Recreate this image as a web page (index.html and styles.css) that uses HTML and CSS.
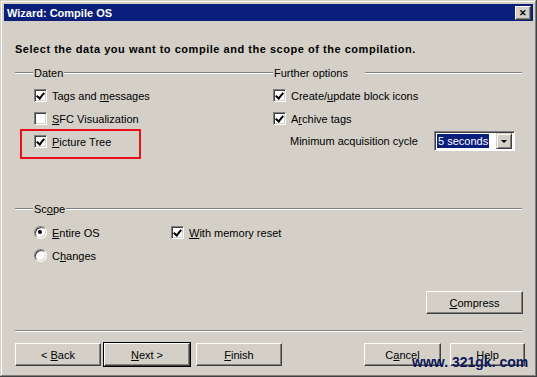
FILE: index.html
```html
<!DOCTYPE html>
<html lang="en">

<head>
    <meta charset="UTF-8">
    <title>Wizard: Compile OS</title>
    <link rel="stylesheet" href="styles.css">
</head>

<body>
    <div class="window">
        <div class="titlebar">
            <span class="title">Wizard: Compile OS</span>
            <span class="close-btn">&#x2715;</span>
        </div>

        <div class="content">
            <h1 class="intro">Select the data you want to compile and the scope of the compilation.</h1>

            <div class="top-groups">
                <div class="group">
                    <div class="group-head">
                        <span class="line lead"></span>
                        <span class="group-label">Daten</span>
                        <span class="line"></span>
                    </div>
                    <div class="group-body">
                        <label class="option"><span class="check checked"></span><span>Tags and <u>m</u>essages</span></label>
                        <label class="option"><span class="check"></span><span><u>S</u>FC Visualization</span></label>
                        <label class="option highlighted"><span class="check checked"></span><span><u>P</u>icture Tree</span></label>
                    </div>
                </div>

                <div class="group">
                    <div class="group-head">
                        <span class="group-label">Further options</span>
                        <span class="line gap"></span>
                    </div>
                    <div class="group-body flush">
                        <label class="option"><span class="check checked"></span><span>Create/<u>u</u>pdate block icons</span></label>
                        <label class="option"><span class="check checked"></span><span>A<u>r</u>chive tags</span></label>
                        <div class="option cycle">
                            <span>Minimum acquisition cycle</span>
                            <div class="select">
                                <span class="select-value">5 seconds</span>
                                <span class="select-btn"></span>
                            </div>
                        </div>
                    </div>
                </div>
            </div>

            <div class="group scope">
                <div class="group-head">
                    <span class="line lead"></span>
                    <span class="group-label">Sc<u>o</u>pe</span>
                    <span class="line"></span>
                </div>
                <div class="scope-grid">
                    <label class="option"><span class="radio selected"></span><span><u>E</u>ntire OS</span></label>
                    <label class="option"><span class="check checked"></span><span><u>W</u>ith memory reset</span></label>
                    <label class="option"><span class="radio"></span><span>C<u>h</u>anges</span></label>
                </div>
            </div>

            <div class="compress-row">
                <button class="btn compress"><u>C</u>ompress</button>
            </div>

            <div class="separator"></div>

            <div class="button-row">
                <div class="btn-group">
                    <button class="btn">&lt; <u>B</u>ack</button>
                    <button class="btn default"><u>N</u>ext &gt;</button>
                    <button class="btn finish"><u>F</u>inish</button>
                </div>
                <div class="btn-group">
                    <button class="btn cancel">C<u>a</u>ncel</button>
                    <button class="btn help">Help</button>
                </div>
            </div>
        </div>

        <div class="watermark">www. 321gk. com</div>
    </div>
</body>

</html>
```

FILE: styles.css
```css
:root {
    --face: #d4d0c8;
    --shadow: #808080;
    --dark: #404040;
    --light: #ffffff;
    --title: #0a1e7c;
}

* {
    box-sizing: border-box;
    margin: 0;
    padding: 0;
}

body {
    font-family: 'Liberation Sans', Arial, sans-serif;
    font-size: 11px;
    color: #000;
    background: var(--face);
    width: 537px;
    height: 377px;
    overflow: hidden;
}

.window {
    position: relative;
    width: 537px;
    height: 377px;
    padding: 4px;
    background: var(--face);
    box-shadow: inset -1px -1px var(--dark), inset 1px 1px var(--face),
        inset -2px -2px var(--shadow), inset 2px 2px var(--light);
}

.titlebar {
    height: 17px;
    background: var(--title);
    display: flex;
    align-items: center;
    justify-content: space-between;
    padding: 0 2px 0 3px;
}

.title {
    color: #fff;
    font-weight: bold;
    font-size: 11px;
}

.close-btn {
    width: 16px;
    height: 14px;
    background: var(--face);
    font-size: 9px;
    font-weight: bold;
    line-height: 12px;
    text-align: center;
    border: 1px solid;
    border-color: var(--light) var(--dark) var(--dark) var(--light);
    box-shadow: inset -1px -1px var(--shadow);
}

.content {
    padding: 0 11px;
}

.intro {
    font-size: 11px;
    font-weight: bold;
    letter-spacing: 0.53px;
    margin-top: 22px;
    line-height: 13px;
    white-space: nowrap;
}

.top-groups {
    display: grid;
    grid-template-columns: 258px 1fr;
    margin-top: 10px;
}

.group-head {
    display: flex;
    align-items: center;
    height: 13px;
}

.line {
    flex: 1;
    height: 2px;
    border-top: 1px solid var(--shadow);
    border-bottom: 1px solid var(--light);
}

.line.lead {
    flex: 0 0 18px;
}

.line.gap {
    margin-left: 16px;
}

.group-label {
    padding: 0 1px;
}

.group-body {
    display: flex;
    flex-direction: column;
    gap: 10px;
    padding: 10px 0 0 19px;
}

.group-body.flush {
    padding-left: 0;
}

.option {
    display: flex;
    align-items: center;
    height: 13px;
    position: relative;
    white-space: nowrap;
}

.check,
.radio {
    width: 13px;
    height: 13px;
    margin-right: 5px;
    background: #fff;
    flex: none;
    position: relative;
    border: 1px solid;
    border-color: var(--shadow) var(--light) var(--light) var(--shadow);
    box-shadow: inset 1px 1px var(--dark), inset -1px -1px var(--face);
}

.check.checked::after {
    content: "";
    position: absolute;
    left: 3px;
    top: 1px;
    width: 3px;
    height: 6px;
    border: solid #000;
    border-width: 0 2px 2px 0;
    transform: rotate(40deg);
}

.radio {
    border-radius: 50%;
    margin-right: 5px;
}

.radio.selected::after {
    content: "";
    position: absolute;
    left: 3px;
    top: 3px;
    width: 4px;
    height: 4px;
    border-radius: 50%;
    background: #000;
}

.highlighted::before {
    content: "";
    position: absolute;
    left: -14px;
    top: -6px;
    width: 117px;
    height: 26px;
    border: 2px solid #e8101c;
}

.cycle {
    padding-left: 17px;
    justify-content: space-between;
    width: 242px;
    height: 20px;
    margin-top: -4px;
}

.select {
    width: 81px;
    height: 20px;
    background: #fff;
    display: flex;
    align-items: center;
    padding: 2px;
    border: 1px solid;
    border-color: var(--shadow) var(--light) var(--light) var(--shadow);
    box-shadow: inset 1px 1px var(--dark);
}

.select-value {
    flex: 1;
    background: var(--title);
    color: #fff;
    height: 14px;
    line-height: 14px;
    padding-left: 1px;
    margin-right: 7px;
    white-space: nowrap;
    overflow: hidden;
}

.select-btn {
    flex: none;
    width: 16px;
    height: 16px;
    background: var(--face);
    border: 1px solid;
    border-color: var(--face) var(--dark) var(--dark) var(--face);
    box-shadow: inset 1px 1px var(--light), inset -1px -1px var(--shadow);
    position: relative;
}

.select-btn::after {
    content: "";
    position: absolute;
    left: 4px;
    top: 6px;
    border: 3px solid transparent;
    border-top: 3px solid #000;
}

.scope {
    margin-top: 51px;
}

.scope-grid {
    display: grid;
    grid-template-columns: 137px 1fr;
    row-gap: 10px;
    padding: 11px 0 0 19px;
}

.compress-row {
    display: flex;
    justify-content: flex-end;
    margin-top: 29px;
    margin-right: -1px;
}

.btn {
    font-family: inherit;
    font-size: 11px;
    height: 23px;
    width: 86px;
    background: var(--face);
    color: #000;
    border: 1px solid;
    border-color: var(--light) var(--dark) var(--dark) var(--light);
    box-shadow: inset -1px -1px var(--shadow);
}

.btn.compress {
    width: 97px;
}

.btn.default {
    outline: 1px solid #000;
    margin-left: 3px;
}

.btn.finish {
    margin-left: 6px;
}

.btn.cancel {
    width: 77px;
}

.btn.help {
    width: 75px;
    margin-left: 9px;
    margin-right: -3px;
}

.separator {
    height: 2px;
    margin-top: 16px;
    border-top: 1px solid var(--shadow);
    border-bottom: 1px solid var(--light);
}

.button-row {
    display: flex;
    justify-content: space-between;
    margin-top: 11px;
}

.btn-group {
    display: flex;
}

.watermark {
    position: absolute;
    left: 412px;
    top: 354px;
    font-family: 'Liberation Sans', Arial, sans-serif;
    font-size: 14px;
    font-weight: bold;
    color: #0c1656;
    white-space: nowrap;
}
```
